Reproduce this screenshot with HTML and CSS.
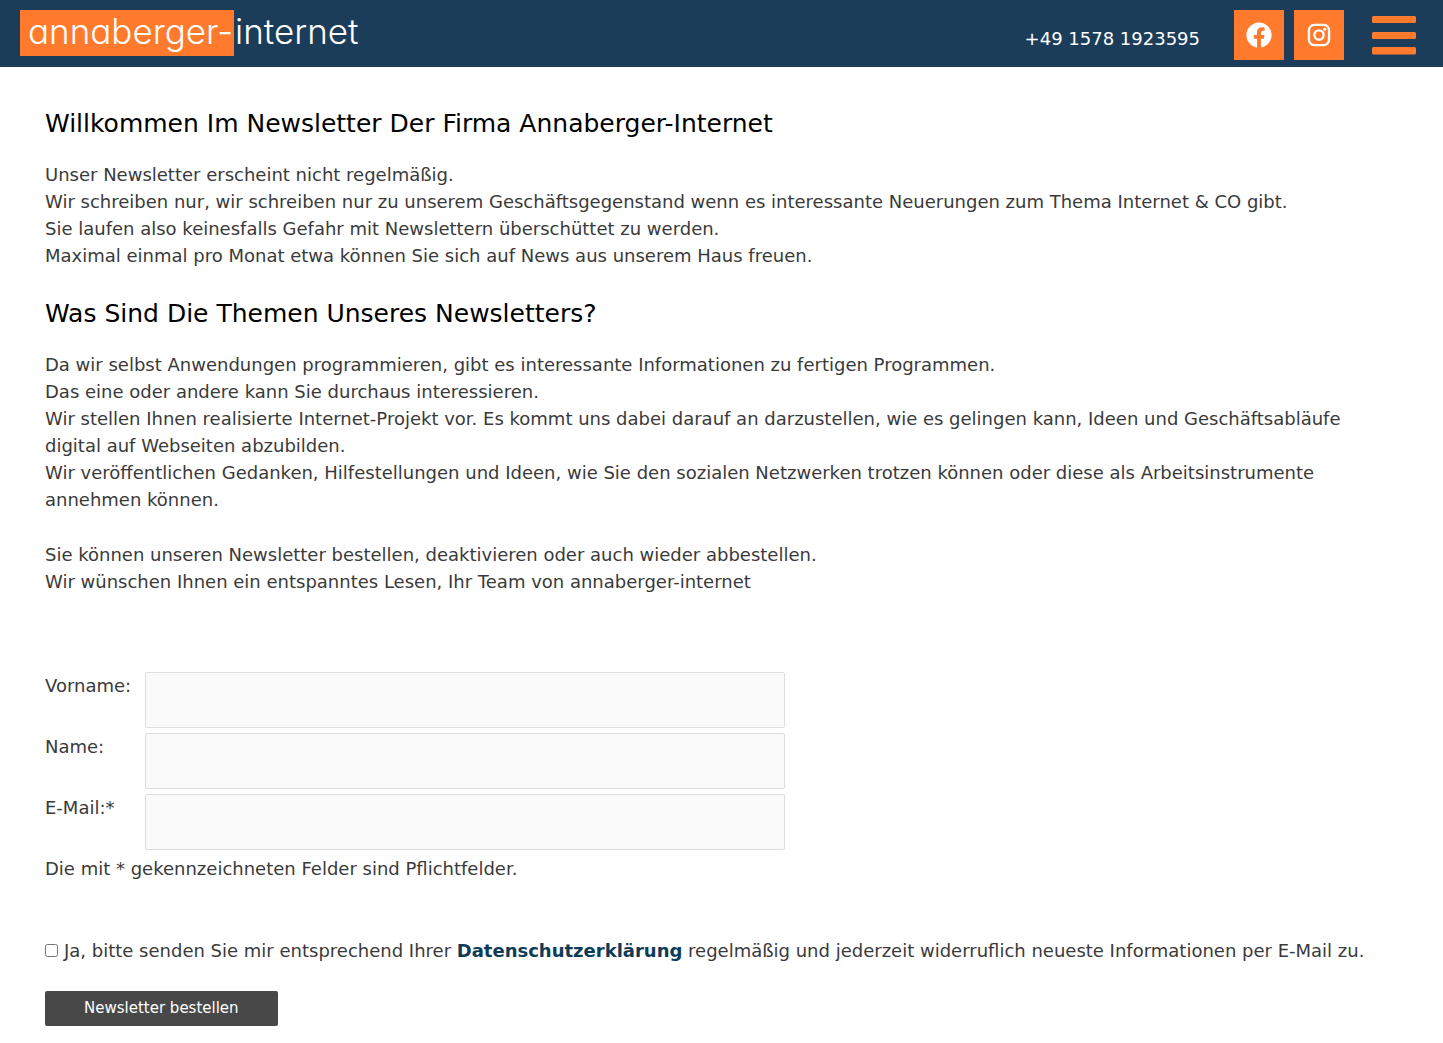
FILE: index.html
```html
<!DOCTYPE html>
<html lang="de">
<head>
<meta charset="utf-8">
<meta name="viewport" content="width=device-width, initial-scale=1">
<title>Newsletter - annaberger-internet</title>
<link rel="stylesheet" href="styles.css">
</head>
<body>
<header class="site-header">
  <a class="logo" href="#"><span class="logo-mark">annaberger-</span><span class="logo-rest">internet</span></a>
  <div class="header-tools">
    <a class="phone" href="tel:+4915781923595">+49 1578 1923595</a>
    <nav class="social">
      <a class="social-link" href="#" aria-label="Facebook">
        <svg width="26" height="26" viewBox="0 0 512 512" fill="currentColor"><path d="M504 256C504 119 393 8 256 8S8 119 8 256c0 123.780 90.690 226.380 209.250 245V327.690h-63V256h63v-54.640c0-62.150 37-96.480 93.670-96.480 27.140 0 55.520 4.840 55.520 4.840v61h-31.280c-30.800 0-40.410 19.120-40.410 38.730V256h68.780l-11 71.690h-57.780V501C413.310 482.380 504 379.780 504 256z"/></svg>
      </a>
      <a class="social-link" href="#" aria-label="Instagram">
        <svg width="26" height="26" viewBox="0 0 24 24" fill="none" stroke="currentColor" stroke-width="2.200"><rect x="2.700" y="2.700" width="18.600" height="18.600" rx="5"/><circle cx="12" cy="12" r="4.300"/><circle cx="17.300" cy="6.700" r="1.400" fill="currentColor" stroke="none"/></svg>
      </a>
    </nav>
    <button class="menu-button" type="button" aria-label="Menü">
      <svg width="44" height="39" viewBox="0 0 44 39" fill="currentColor"><rect width="44" height="7" rx="1.500"/><rect y="16" width="44" height="7" rx="1.500"/><rect y="31" width="44" height="7.500" rx="1.500"/></svg>
    </button>
  </div>
</header>
<main class="content">
  <h2 class="heading">Willkommen Im Newsletter Der Firma Annaberger-Internet</h2>
  <p class="text">Unser Newsletter erscheint nicht regelmäßig.<br>
  Wir schreiben nur, wir schreiben nur zu unserem Geschäftsgegenstand wenn es interessante Neuerungen zum Thema Internet &amp; CO gibt.<br>
  Sie laufen also keinesfalls Gefahr mit Newslettern überschüttet zu werden.<br>
  Maximal einmal pro Monat etwa können Sie sich auf News aus unserem Haus freuen.</p>
  <h2 class="heading">Was Sind Die Themen Unseres Newsletters?</h2>
  <p class="text">Da wir selbst Anwendungen programmieren, gibt es interessante Informationen zu fertigen Programmen.<br>
  Das eine oder andere kann Sie durchaus interessieren.<br>
  Wir stellen Ihnen realisierte Internet-Projekt vor. Es kommt uns dabei darauf an darzustellen, wie es gelingen kann, Ideen und Geschäftsabläufe digital auf Webseiten abzubilden.<br>
  Wir veröffentlichen Gedanken, Hilfestellungen und Ideen, wie Sie den sozialen Netzwerken trotzen können oder diese als Arbeitsinstrumente annehmen können.</p>
  <p class="text">Sie können unseren Newsletter bestellen, deaktivieren oder auch wieder abbestellen.<br>
  Wir wünschen Ihnen ein entspanntes Lesen, Ihr Team von annaberger-internet</p>
  <form class="newsletter-form">
    <div class="fields">
      <label for="vorname">Vorname:</label><input class="field" id="vorname" type="text">
      <label for="name">Name:</label><input class="field" id="name" type="text">
      <label for="email">E-Mail:*</label><input class="field" id="email" type="email" required>
    </div>
    <p class="note">Die mit * gekennzeichneten Felder sind Pflichtfelder.</p>
    <div class="consent">
      <input class="check" id="consent" type="checkbox" required>
      <label for="consent">Ja, bitte senden Sie mir entsprechend Ihrer <a class="privacy" href="#">Datenschutzerklärung</a> regelmäßig und jederzeit widerruflich neueste Informationen per E-Mail zu.</label>
    </div>
    <button class="submit" type="submit">Newsletter bestellen</button>
  </form>
</main>
</body>
</html>
```
FILE: styles.css
```css
* {
  box-sizing: border-box;
}

body {
  margin: 0;
  background: #fff;
  color: #3a3a3a;
  font-family: Verdana, "DejaVu Sans", sans-serif;
  font-size: 18px;
  line-height: 27px;
}

a {
  text-decoration: none;
}

.site-header {
  display: flex;
  justify-content: space-between;
  align-items: flex-start;
  padding: 10px 25px 7px 20px;
  background: #1c3d5a;
}

.logo {
  display: flex;
  color: #fff;
  font-family: Inter, sans-serif;
  font-size: 35px;
  font-weight: 300;
  font-feature-settings: "cv11";
  line-height: 42px;
}

.logo-mark {
  min-width: 214px;
  padding: 0 0 4px 8px;
  background: #ff7a2d;
}

.logo-rest {
  padding-left: 1px;
}

.header-tools {
  display: flex;
  align-items: center;
}

.phone {
  margin-right: 34px;
  padding-top: 7px;
  color: #fff;
}

.social {
  display: flex;
  gap: 10px;
}

.social-link {
  display: flex;
  align-items: center;
  justify-content: center;
  width: 50px;
  height: 50px;
  background: #ff7a2d;
  color: #fff;
}

.menu-button {
  display: flex;
  margin-left: 26px;
  padding: 0 2px;
  border: 0;
  background: none;
  color: #ff7a2d;
  cursor: pointer;
}

.content {
  padding: 40px 45px 17px;
}

.heading {
  margin: 0 0 20px;
  color: #000;
  font-size: 25px;
  font-weight: 400;
  line-height: 34px;
}

.text {
  margin: 0 0 28px;
}

.newsletter-form {
  padding-top: 49px;
}

.fields {
  display: grid;
  grid-template-columns: 100px minmax(0, 640px);
  row-gap: 5px;
}

.field {
  width: 100%;
  height: 56px;
  padding: 12px;
  border: 1px solid #ddd;
  border-radius: 2px;
  background: #fafafa;
  color: #666;
  font: inherit;
}

.note {
  margin: 5px 0 55px;
}

.consent {
  display: flex;
  align-items: flex-start;
  gap: 6px;
}

.check {
  flex: none;
  width: 13px;
  height: 13px;
  margin: 7px 0 0;
}

.privacy {
  color: #0e3c57;
  font-weight: 700;
}

.submit {
  margin-top: 27px;
  padding: 4px 39px;
  border: 0;
  border-radius: 2px;
  background: #484848;
  color: #fff;
  font: inherit;
  font-size: 15px;
  line-height: 27px;
  cursor: pointer;
}
```
